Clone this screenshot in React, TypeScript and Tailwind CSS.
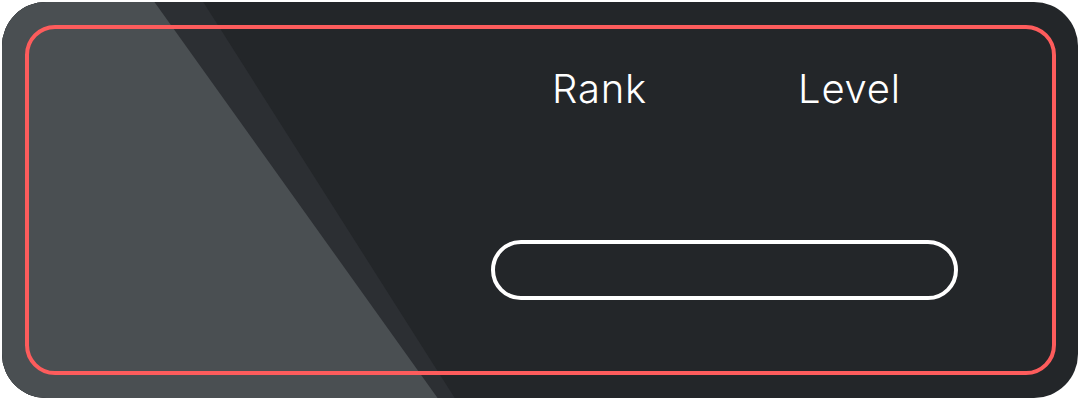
import React from "react";

export default function App() {
  return (
    <div className="w-[1080px] h-[400px] bg-white p-[2px]" style={{ fontFamily: "Inter, 'Noto Sans', sans-serif" }}>
      <div className="relative w-[1076px] h-[396px] rounded-[44px] overflow-hidden bg-[#232629] p-[23px]">
        <svg className="absolute inset-0" width="1076" height="396" viewBox="2 2 1076 396">
          <polygon points="0,0 202,0 456,400 0,400" fill="#2c2f33" />
          <polygon points="0,0 153,0 439,400 0,400" fill="#4a4f52" />
        </svg>
        <div className="relative h-[350px] w-[1031px] rounded-[30px] border-4 border-[#fd5c5c] pt-[40px] pl-[462px]">
          <div className="flex w-[467px] justify-between">
            <div className="w-[217px] text-center text-[40px] font-light tracking-[0.8px] leading-none text-white">Rank</div>
            <div className="w-[217px] text-center text-[40px] font-light tracking-[0.8px] leading-none text-white">Level</div>
          </div>
          <div className="mt-[131px] h-[60px] w-[467px] rounded-full border-4 border-white" />
        </div>
      </div>
    </div>
  );
}
